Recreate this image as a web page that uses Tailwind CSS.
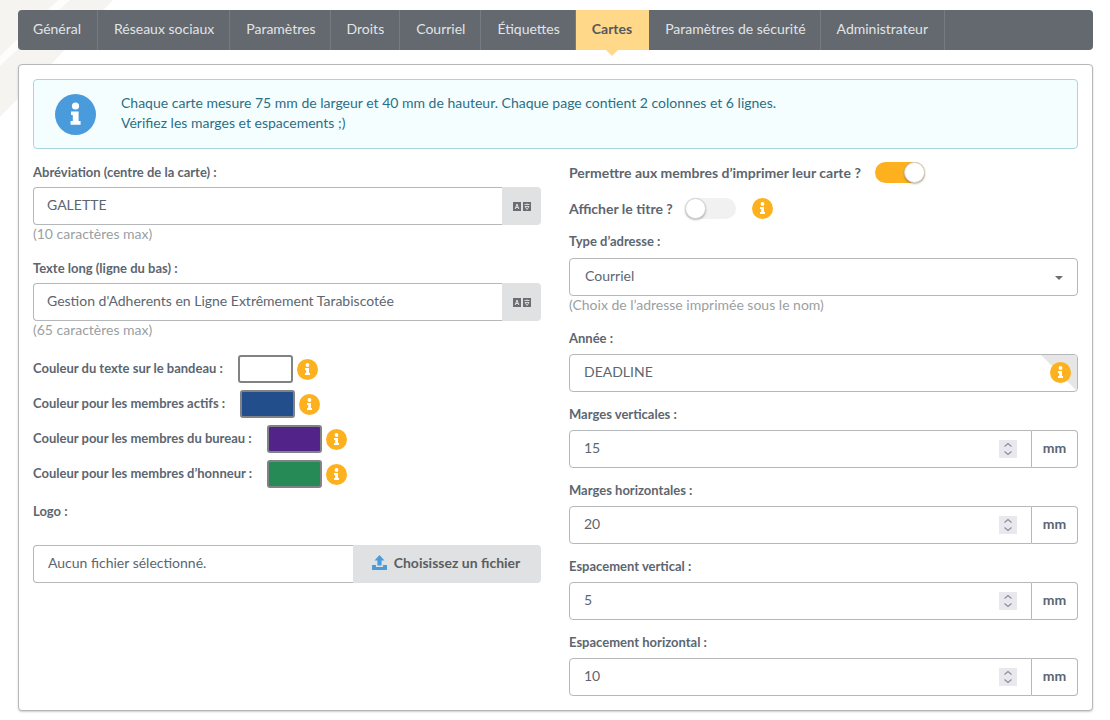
<!DOCTYPE html>
<html>
  <head>
    <title>Cartes</title>
    <script src="https://cdn.jsdelivr.net/npm/@tailwindcss/browser@4"></script>
  </head>
  <body class="bg-white font-['Lato','Noto_Sans',sans-serif] text-[14px] text-[#5c6670] overflow-hidden">
    <div class="relative w-[1110px] h-[720px] overflow-hidden">
      <!-- background stripe behind the panels -->
      <svg class="absolute left-0 top-0" width="120" height="125" viewBox="0 0 120 125">
        <polygon points="0,0 113,0 0,117" fill="#f5f4f1"/>
        <polygon points="58,0 70,0 0,66 0,56" fill="#fdfdfc"/>
      </svg>

      <div class="relative pl-[18px] pr-[17px] pt-[10px]">
        <!-- tabs -->
        <nav class="flex h-[40px] rounded-[4px] bg-[#63696f] text-[#e2e4e6]">
          <a class="flex items-center pb-[4px] pl-[15px] pr-[16px] border-r border-[#757b81]">Général</a>
          <a class="flex items-center pb-[4px] pl-[16px] pr-[15px] border-r border-[#757b81]">Réseaux sociaux</a>
          <a class="flex items-center pb-[4px] pl-[16px] pr-[14px] border-r border-[#757b81]">Paramètres</a>
          <a class="flex items-center pb-[4px] pl-[16px] pr-[15px] border-r border-[#757b81]">Droits</a>
          <a class="flex items-center pb-[4px] pl-[16px] pr-[15px] border-r border-[#757b81]">Courriel</a>
          <a class="flex items-center pb-[4px] pl-[16px] pr-[15px] border-r border-[#757b81]">Étiquettes</a>
          <a class="relative flex items-center pb-[4px] pl-[16px] pr-[17px] bg-[#ffd88a] text-[#54585c] font-bold">
            Cartes
            <span class="absolute left-1/2 -bottom-[6px] -ml-[6px] w-0 h-0 border-x-[6px] border-x-transparent border-t-[6px] border-t-[#ffd88a]"></span>
          </a>
          <a class="flex items-center pb-[4px] pl-[16px] pr-[14px] border-r border-[#757b81]">Paramètres de sécurité</a>
          <a class="flex items-center pb-[4px] pl-[16px] pr-[16px] border-r border-[#757b81]">Administrateur</a>
        </nav>

        <!-- panel -->
        <div class="mt-[14px] h-[647px] rounded-[4px] border border-[#b4b8ba] bg-white p-[14px] shadow-[0_1px_2px_rgba(0,0,0,0.2)]">
          <div class="flex items-center h-[70px] rounded-[4px] border border-[#a7d6e1] bg-[#f5feff] text-[#2b6e86]">
            <svg class="ml-[21px] mr-[25px]" width="41" height="41" viewBox="0 0 41 41">
              <circle cx="20.5" cy="20.5" r="20.5" fill="#4a9bdc"/>
              <circle cx="20.5" cy="12" r="3.6" fill="#fff"/>
              <path d="M16 17.5h7.6v9.6h2v3.6h-10v-3.6h2.2v-6h-1.8z" fill="#fff"/>
            </svg>
            <p class="leading-[20px] pb-[2px]">Chaque carte mesure 75 mm de largeur et 40 mm de hauteur. Chaque page contient 2 colonnes et 6 lignes.<br>Vérifiez les marges et espacements ;)</p>
          </div>

          <div class="flex justify-between">
            <!-- left column -->
            <div class="w-[508px]">
              <label class="flex items-end h-[31px] text-[13px] font-bold leading-[16px]">Abréviation (centre de la carte) :</label>
              <div class="mt-[7px] flex h-[38px]">
                <div class="flex-1 flex items-center pb-[4px] pl-[13px] rounded-l-[4px] border border-[#b4b8ba] border-r-0">GALETTE</div>
                <div class="flex items-center justify-center w-[39px] rounded-r-[4px] bg-[#e0e1e2]">
                  <svg width="18" height="9" viewBox="0 0 18 9">
                    <rect width="8" height="9" fill="#6a6e72"/><rect x="10" width="8" height="9" fill="#6a6e72"/>
                    <path d="M2.2 7L4 2l1.8 5M3 5.5h2" stroke="#e0e1e2" stroke-width="1" fill="none"/>
                    <path d="M11.5 2.5h5M14 1.5v1M12 4.5h4l-2 3z" stroke="#e0e1e2" stroke-width="0.9" fill="none"/>
                  </svg>
                </div>
              </div>
              <p class="h-[18px] leading-[18px] text-[#9a9fa3]">(10 caractères max)</p>
              <label class="mt-[16px] flex h-[18px] text-[13px] font-bold leading-[18px]">Texte long (ligne du bas) :</label>
              <div class="mt-[6px] flex h-[38px]">
                <div class="flex-1 flex items-center pb-[4px] pl-[13px] rounded-l-[4px] border border-[#b4b8ba] border-r-0">Gestion d'Adherents en Ligne Extrêmement Tarabiscotée</div>
                <div class="flex items-center justify-center w-[39px] rounded-r-[4px] bg-[#e0e1e2]">
                  <svg width="18" height="9" viewBox="0 0 18 9">
                    <rect width="8" height="9" fill="#6a6e72"/><rect x="10" width="8" height="9" fill="#6a6e72"/>
                    <path d="M2.2 7L4 2l1.8 5M3 5.5h2" stroke="#e0e1e2" stroke-width="1" fill="none"/>
                    <path d="M11.5 2.5h5M14 1.5v1M12 4.5h4l-2 3z" stroke="#e0e1e2" stroke-width="0.9" fill="none"/>
                  </svg>
                </div>
              </div>
              <p class="h-[18px] leading-[18px] text-[#9a9fa3]">(65 caractères max)</p>

              <div class="mt-[16px] flex flex-col gap-[7px] text-[13px] font-bold">
                <div class="flex items-center h-[28px]">
                  <span>Couleur du texte sur le bandeau :</span>
                  <span class="ml-[15px] w-[55px] h-[28px] rounded-[3px] border-2 border-[#7f8386] bg-white"></span>
                  <svg class="ml-[4px]" width="21" height="21" viewBox="0 0 21 21"><circle cx="10.5" cy="10.5" r="10.5" fill="#fdb11e"/><circle cx="10.5" cy="6" r="1.9" fill="#fff"/><path d="M8 9h4v5h1v2H8v-2h1.2v-3H8z" fill="#fff"/></svg>
                </div>
                <div class="flex items-center h-[28px]">
                  <span>Couleur pour les membres actifs :</span>
                  <span class="ml-[15px] w-[55px] h-[28px] rounded-[3px] border-2 border-[#7f8386] bg-[#234e8c]"></span>
                  <svg class="ml-[4px]" width="21" height="21" viewBox="0 0 21 21"><circle cx="10.5" cy="10.5" r="10.5" fill="#fdb11e"/><circle cx="10.5" cy="6" r="1.9" fill="#fff"/><path d="M8 9h4v5h1v2H8v-2h1.2v-3H8z" fill="#fff"/></svg>
                </div>
                <div class="flex items-center h-[28px]">
                  <span>Couleur pour les membres du bureau :</span>
                  <span class="ml-[15px] w-[55px] h-[28px] rounded-[3px] border-2 border-[#7f8386] bg-[#52248a]"></span>
                  <svg class="ml-[4px]" width="21" height="21" viewBox="0 0 21 21"><circle cx="10.5" cy="10.5" r="10.5" fill="#fdb11e"/><circle cx="10.5" cy="6" r="1.9" fill="#fff"/><path d="M8 9h4v5h1v2H8v-2h1.2v-3H8z" fill="#fff"/></svg>
                </div>
                <div class="flex items-center h-[28px]">
                  <span>Couleur pour les membres d’honneur :</span>
                  <span class="ml-[15px] w-[55px] h-[28px] rounded-[3px] border-2 border-[#7f8386] bg-[#258a55]"></span>
                  <svg class="ml-[4px]" width="21" height="21" viewBox="0 0 21 21"><circle cx="10.5" cy="10.5" r="10.5" fill="#fdb11e"/><circle cx="10.5" cy="6" r="1.9" fill="#fff"/><path d="M8 9h4v5h1v2H8v-2h1.2v-3H8z" fill="#fff"/></svg>
                </div>
              </div>

              <label class="mt-[14px] flex h-[18px] text-[13px] font-bold leading-[18px]">Logo :</label>
              <div class="mt-[25px] flex h-[38px]">
                <div class="flex-1 flex items-center pb-[4px] pl-[14px] rounded-l-[4px] border border-[#b4b8ba] border-r-0">Aucun fichier sélectionné.</div>
                <div class="flex items-center justify-center w-[188px] pb-[3px] pr-[2px] rounded-r-[4px] bg-[#e0e1e2] font-bold text-[#5a5e62]">
                  <svg class="mr-[7px]" width="15" height="15" viewBox="0 0 15 15" fill="#4a9bdc"><path d="M7.5 0L12.5 5.5H9.6V10.5H5.4V5.5H2.5z"/><path d="M0 10h4v2h7v-2h4v5H0z"/></svg>
                  Choisissez un fichier
                </div>
              </div>
            </div>

            <!-- right column -->
            <div class="w-[509px]">
              <div class="flex items-center h-[31px] pt-[16px] text-[14px] font-bold">
                <span>Permettre aux membres d’imprimer leur carte ?</span>
                <span class="relative ml-[14px] w-[50px] h-[21px] rounded-full bg-[#fdb11e]">
                  <span class="absolute right-0 top-0 w-[21px] h-[21px] rounded-full bg-white border border-[#d4d4d4] shadow-[0_1px_2px_rgba(0,0,0,0.3)]"></span>
                </span>
              </div>
              <div class="mt-[16px] flex items-center h-[24px] text-[14px] font-bold">
                <span>Afficher le titre ?</span>
                <span class="relative ml-[12px] w-[51px] h-[21px] rounded-full bg-[#f1f1f1]">
                  <span class="absolute left-0 top-0 w-[21px] h-[21px] rounded-full bg-white border border-[#d4d4d4] shadow-[0_1px_2px_rgba(0,0,0,0.3)]"></span>
                </span>
                <svg class="ml-[16px]" width="21" height="21" viewBox="0 0 21 21"><circle cx="10.5" cy="10.5" r="10.5" fill="#fdb11e"/><circle cx="10.5" cy="6" r="1.9" fill="#fff"/><path d="M8 9h4v5h1v2H8v-2h1.2v-3H8z" fill="#fff"/></svg>
              </div>
              <label class="mt-[12px] flex h-[18px] text-[13px] font-bold leading-[18px]">Type d’adresse :</label>
              <div class="mt-[8px] relative flex items-center h-[38px] pb-[4px] pl-[15px] rounded-[4px] border border-[#b4b8ba]">
                Courriel
                <span class="absolute right-[14px] top-[17px] w-0 h-0 border-x-[4px] border-x-transparent border-t-[4px] border-t-[#6a6e72]"></span>
              </div>
              <p class="h-[18px] leading-[18px] text-[#9a9fa3]">(Choix de l’adresse imprimée sous le nom)</p>
              <label class="mt-[15px] flex h-[18px] text-[13px] font-bold leading-[18px]">Année :</label>
              <div class="mt-[7px] relative flex items-center h-[38px] pb-[4px] pl-[14px] rounded-[4px] border border-[#b4b8ba] overflow-hidden">
                DEADLINE
                <span class="absolute right-0 top-0 w-0 h-0 border-l-[36px] border-l-transparent border-t-[36px] border-t-[#e6e6e6]"></span>
                <svg class="absolute right-[6px] top-[7px]" width="21" height="21" viewBox="0 0 21 21"><circle cx="10.5" cy="10.5" r="10.5" fill="#fdb11e"/><circle cx="10.5" cy="6" r="1.9" fill="#fff"/><path d="M8 9h4v5h1v2H8v-2h1.2v-3H8z" fill="#fff"/></svg>
              </div>

              <label class="mt-[13px] flex h-[18px] text-[13px] font-bold leading-[18px]">Marges verticales :</label>
              <div class="mt-[7px] flex h-[38px]">
                <div class="flex-1 flex items-center justify-between pl-[14px] pr-[14px] rounded-l-[4px] border border-[#b4b8ba]">
                  <span class="pb-[4px]">15</span>
                  <svg width="18" height="18" viewBox="0 0 18 18"><rect width="18" height="18" fill="#e8e8ee"/><path d="M5.5 6.5L9 3.5l3.5 3M5.5 11.5L9 14.5l3.5-3" stroke="#8d8d98" stroke-width="1.2" fill="none"/></svg>
                </div>
                <div class="flex items-center justify-center w-[46px] pb-[3px] rounded-r-[4px] border border-l-0 border-[#b4b8ba] font-bold">mm</div>
              </div>
              <label class="mt-[13px] flex h-[18px] text-[13px] font-bold leading-[18px]">Marges horizontales :</label>
              <div class="mt-[7px] flex h-[38px]">
                <div class="flex-1 flex items-center justify-between pl-[14px] pr-[14px] rounded-l-[4px] border border-[#b4b8ba]">
                  <span class="pb-[4px]">20</span>
                  <svg width="18" height="18" viewBox="0 0 18 18"><rect width="18" height="18" fill="#e8e8ee"/><path d="M5.5 6.5L9 3.5l3.5 3M5.5 11.5L9 14.5l3.5-3" stroke="#8d8d98" stroke-width="1.2" fill="none"/></svg>
                </div>
                <div class="flex items-center justify-center w-[46px] pb-[3px] rounded-r-[4px] border border-l-0 border-[#b4b8ba] font-bold">mm</div>
              </div>
              <label class="mt-[13px] flex h-[18px] text-[13px] font-bold leading-[18px]">Espacement vertical :</label>
              <div class="mt-[7px] flex h-[38px]">
                <div class="flex-1 flex items-center justify-between pl-[14px] pr-[14px] rounded-l-[4px] border border-[#b4b8ba]">
                  <span class="pb-[4px]">5</span>
                  <svg width="18" height="18" viewBox="0 0 18 18"><rect width="18" height="18" fill="#e8e8ee"/><path d="M5.5 6.5L9 3.5l3.5 3M5.5 11.5L9 14.5l3.5-3" stroke="#8d8d98" stroke-width="1.2" fill="none"/></svg>
                </div>
                <div class="flex items-center justify-center w-[46px] pb-[3px] rounded-r-[4px] border border-l-0 border-[#b4b8ba] font-bold">mm</div>
              </div>
              <label class="mt-[13px] flex h-[18px] text-[13px] font-bold leading-[18px]">Espacement horizontal :</label>
              <div class="mt-[7px] flex h-[38px]">
                <div class="flex-1 flex items-center justify-between pl-[14px] pr-[14px] rounded-l-[4px] border border-[#b4b8ba]">
                  <span class="pb-[4px]">10</span>
                  <svg width="18" height="18" viewBox="0 0 18 18"><rect width="18" height="18" fill="#e8e8ee"/><path d="M5.5 6.5L9 3.5l3.5 3M5.5 11.5L9 14.5l3.5-3" stroke="#8d8d98" stroke-width="1.2" fill="none"/></svg>
                </div>
                <div class="flex items-center justify-center w-[46px] pb-[3px] rounded-r-[4px] border border-l-0 border-[#b4b8ba] font-bold">mm</div>
              </div>
            </div>
          </div>
        </div>
      </div>
    </div>
  </body>
</html>
